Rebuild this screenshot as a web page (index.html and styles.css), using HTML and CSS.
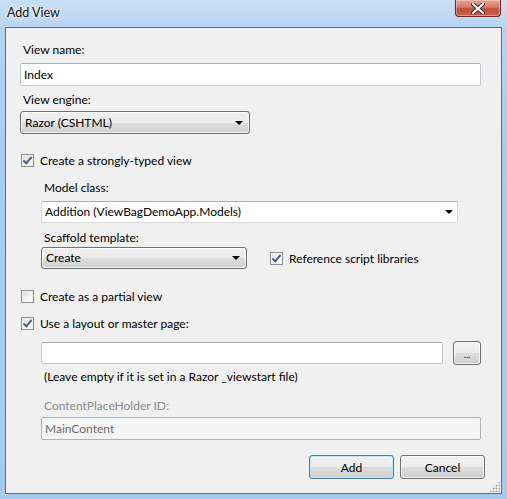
FILE: index.html
```html
<!DOCTYPE html>
<html lang="en">
<head>
  <meta charset="UTF-8" />
  <title>Add View</title>
  <link rel="stylesheet" href="styles.css">
</head>
<body>
  <div class="window">
    <div class="titlebar">
      <span class="title">Add View</span>
      <button class="close-btn">
        <svg width="14" height="11" viewBox="0 0 14 11">
          <path d="M2 1 L12 10 M12 1 L2 10" stroke="#3a2020" stroke-width="4" stroke-linecap="square"/>
          <path d="M2 1 L12 10 M12 1 L2 10" stroke="#ffffff" stroke-width="2.2" stroke-linecap="square"/>
        </svg>
      </button>
    </div>

    <div class="client">
      <div class="label">View name:</div>
      <div class="textbox wide">Index</div>

      <div class="label mt6">View engine:</div>
      <div class="select engine">Razor (CSHTML)<span class="arrow"></span></div>

      <label class="check-row strongly">
        <span class="checkbox checked"></span>Create a strongly-typed view
      </label>

      <div class="indent">
        <div class="label model-label">Model class:</div>
        <div class="combo">Addition (ViewBagDemoApp.Models)<span class="arrow"></span></div>

        <div class="label scaffold-label">Scaffold template:</div>
        <div class="scaffold-row">
          <div class="select scaffold">Create<span class="arrow"></span></div>
          <label class="check-row ref">
            <span class="checkbox checked"></span>Reference script libraries
          </label>
        </div>
      </div>

      <label class="check-row partial">
        <span class="checkbox"></span>Create as a partial view
      </label>
      <label class="check-row layout">
        <span class="checkbox checked"></span>Use a layout or master page:
      </label>

      <div class="indent">
        <div class="layout-row">
          <div class="textbox layout-input"></div>
          <button class="btn browse">...</button>
        </div>
        <div class="hint">(Leave empty if it is set in a Razor _viewstart file)</div>

        <div class="label disabled cph-label">ContentPlaceHolder ID:</div>
        <div class="textbox disabled-box">MainContent</div>
      </div>

      <div class="actions">
        <button class="btn default">Add</button>
        <button class="btn">Cancel</button>
      </div>
      <div class="grip"></div>
    </div>
  </div>
</body>
</html>
```

FILE: styles.css
```css
body {
  margin: 0;
  font-family: "Segoe UI", Lato, "Noto Sans", sans-serif;
  font-size: 12px;
  color: #000;
  background: #a9cbee;
}

.window {
  width: 507px;
  height: 499px;
  box-sizing: border-box;
  padding: 0 5px 5px 5px;
  background: linear-gradient(to bottom, #c9dff5 0%, #b6d3f1 6%, #a9cbee 30%, #a6c9ec 100%);
  position: relative;
  overflow: hidden;
}

.titlebar {
  height: 27px;
  display: flex;
  align-items: flex-start;
}

.title {
  padding: 5px 0 0 2px;
  font-size: 12.5px;
  color: #111;
  text-shadow: 0 0 6px #ffffff, 0 0 3px #ffffff;
}

.close-btn {
  position: absolute;
  top: 0;
  right: 6px;
  width: 46px;
  height: 17px;
  padding: 0;
  border: 1px solid #6b2a22;
  border-top: none;
  border-radius: 0 0 4px 4px;
  background: linear-gradient(to bottom, #e8a595 0%, #d6796a 45%, #c24e3c 55%, #c9604a 100%);
  box-shadow: inset 0 0 0 1px rgba(255, 220, 210, 0.45);
  display: flex;
  align-items: center;
  justify-content: center;
}

.client {
  height: 467px;
  box-sizing: border-box;
  border: 1px solid #5d6b7a;
  background: #f0f0f0;
  padding: 14px 20px 0 14px;
  position: relative;
}

.label {
  height: 15px;
  line-height: 15px;
  padding-left: 3px;
}

.mt6 {
  margin-top: 6px;
}

.label.disabled {
  color: #8a8a8a;
}

.textbox {
  height: 23px;
  box-sizing: border-box;
  border: 1px solid #c5c9ce;
  border-top-color: #abadb3;
  border-radius: 2px;
  background: #fff;
  line-height: 21px;
  padding-left: 3px;
}

.textbox.wide {
  margin-top: 6px;
}

.select {
  position: relative;
  height: 23px;
  box-sizing: border-box;
  border: 1px solid #707070;
  border-radius: 3px;
  background: linear-gradient(to bottom, #f2f2f2 0%, #ebebeb 50%, #dddddd 51%, #cfcfcf 100%);
  box-shadow: inset 0 0 0 1px rgba(255, 255, 255, 0.7);
  line-height: 21px;
  padding-left: 4px;
}

.arrow {
  position: absolute;
  right: 6px;
  top: 9px;
  width: 0;
  height: 0;
  border-left: 4px solid transparent;
  border-right: 4px solid transparent;
  border-top: 4px solid #000;
}

.engine {
  width: 230px;
  margin-top: 4px;
}

.check-row {
  display: flex;
  align-items: center;
  height: 15px;
  gap: 6px;
  padding-left: 1px;
}

.checkbox {
  width: 13px;
  height: 13px;
  box-sizing: border-box;
  border: 1px solid #8e8f8f;
  background: linear-gradient(135deg, #dcdcdc 0%, #f4f4f4 60%, #ffffff 100%);
  box-shadow: inset 0 0 0 1px #f4f4f4;
  position: relative;
  flex: none;
}

.checkbox.checked::after {
  content: '';
  position: absolute;
  left: 3px;
  top: 0px;
  width: 3px;
  height: 7px;
  border-right: 2px solid #4a5f97;
  border-bottom: 2px solid #4a5f97;
  transform: rotate(40deg);
}

.strongly {
  margin-top: 19px;
}

.indent {
  margin-left: 21px;
}

.model-label {
  margin-top: 12px;
}

.combo {
  position: relative;
  margin-top: 6px;
  width: 417px;
  height: 22px;
  box-sizing: border-box;
  border: 1px solid #dadada;
  border-top-color: #abadb3;
  border-radius: 2px;
  background: #fff;
  line-height: 20px;
  padding-left: 3px;
}

.combo .arrow {
  right: 4px;
  top: 8px;
}

.scaffold-label {
  margin-top: 7px;
}

.scaffold-row {
  margin-top: 2px;
  display: flex;
  align-items: center;
}

.scaffold {
  width: 206px;
  height: 22px;
  line-height: 20px;
}

.scaffold .arrow {
  top: 8px;
}

.ref {
  margin-left: 22px;
}

.partial {
  margin-top: 20px;
}

.layout {
  margin-top: 12px;
}

.layout-row {
  margin-top: 10px;
  display: flex;
  align-items: center;
  gap: 10px;
}

.layout-input {
  width: 402px;
  height: 22px;
}

.hint {
  margin-top: 4px;
  height: 15px;
  line-height: 15px;
  padding-left: 3px;
}

.cph-label {
  margin-top: 14px;
}

.disabled-box {
  margin-top: 4px;
  background: #f4f4f4;
  border-color: #adb2b5;
  color: #6d6d6d;
}

.btn {
  height: 24px;
  box-sizing: border-box;
  border: 1px solid #707070;
  border-radius: 3px;
  background: linear-gradient(to bottom, #f2f2f2 0%, #ebebeb 50%, #dddddd 51%, #cfcfcf 100%);
  box-shadow: inset 0 0 0 1px rgba(255, 255, 255, 0.75);
  font-family: inherit;
  font-size: 12px;
  color: #000;
  padding: 0;
}

.browse {
  width: 28px;
  font-size: 9px;
  line-height: 10px;
  padding-top: 4px;
}

.actions {
  margin-top: 15px;
  display: flex;
  justify-content: flex-end;
  gap: 6px;
  margin-right: -4px;
}

.actions .btn {
  width: 85px;
}

.btn.default {
  border-color: #3c7fb1;
  box-shadow: inset 0 0 0 1px #bfe6f9;
}

.grip {
  position: absolute;
  right: 1px;
  bottom: 1px;
  width: 11px;
  height: 11px;
  background: radial-gradient(circle, #a0a0a0 0.8px, transparent 1.2px) 0 0 / 3px 3px;
  clip-path: polygon(100% 0, 100% 100%, 0 100%);
}
```
